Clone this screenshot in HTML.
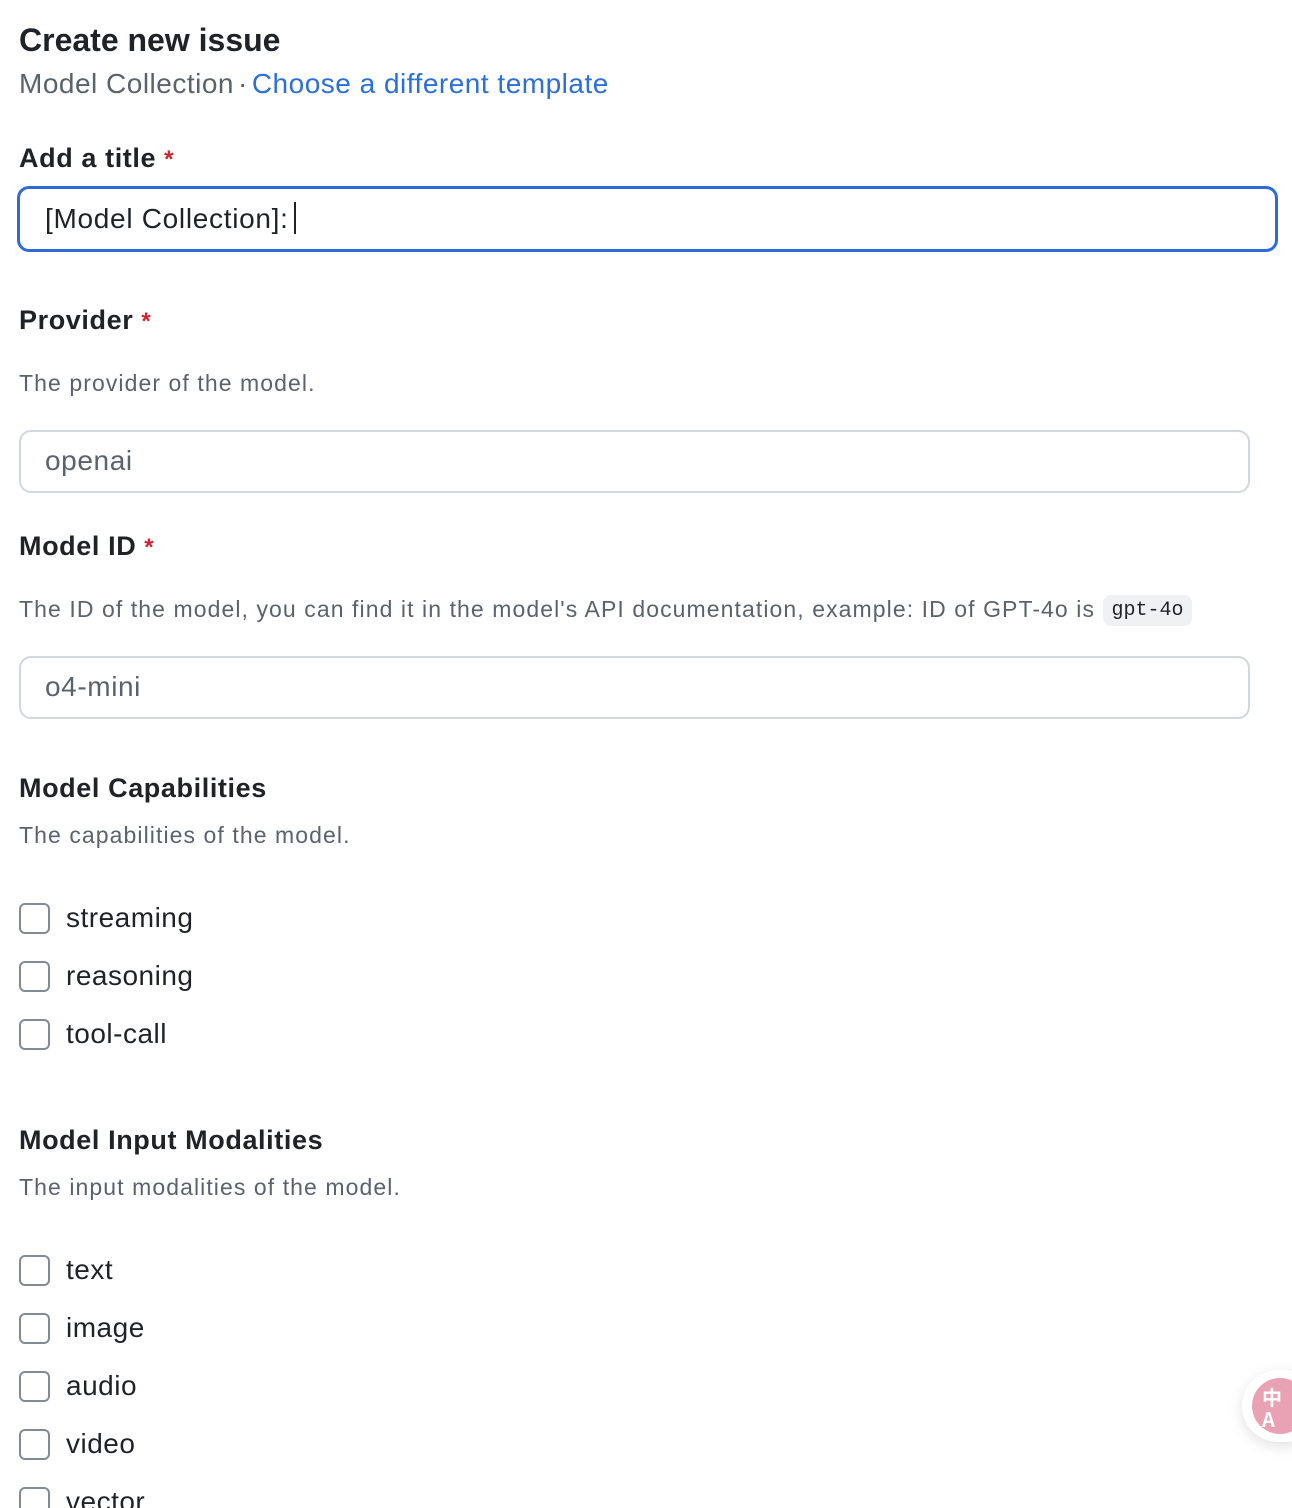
<!DOCTYPE html>
<html><head><meta charset="utf-8"><style>
html,body{margin:0;padding:0;background:#fff;width:1292px;height:1508px;overflow:hidden;position:relative;font-family:"Liberation Sans",sans-serif;color:#1f2328}
.a{position:absolute;white-space:nowrap;line-height:40px;height:40px}
.h{font-weight:bold;font-size:27px;letter-spacing:0.6px}
.d{font-size:23px;color:#59636e;letter-spacing:1.08px}
.req{color:#d1242f;font-size:24px;margin-left:8px}
.inp{position:absolute;left:19px;width:1227px;height:59px;border:2px solid #d0d7de;border-radius:12px;box-sizing:content-box;background:#fff}
.inp span{position:absolute;left:24px;top:9px;font-size:28px;line-height:40px;color:#59636e;letter-spacing:0.6px}
.cb{position:absolute;left:19px;width:27px;height:27px;border:2px solid #818b98;border-radius:6px}
.cl{position:absolute;left:66px;font-size:28px;line-height:40px;height:40px;color:#1f2328;letter-spacing:0.5px}
</style></head><body>
<div class="a" style="left:19px;top:20px;font-size:32px;font-weight:bold">Create new issue</div>
<div class="a" style="left:19px;top:64px;font-size:28px;color:#59636e;letter-spacing:0.5px">Model Collection<span style="margin:0 4px">·</span><span style="color:#2a6fdb">Choose a different template</span></div>

<div class="a h" style="left:19px;top:138px">Add a title<span class="req">*</span></div>
<div style="position:absolute;left:17px;top:186px;width:1255px;height:60px;border:3px solid #2f6bd6;border-radius:12px"></div>
<div class="a" style="left:45px;top:199px;font-size:28px;color:#1f2328;letter-spacing:0.7px">[Model Collection]:<span style="display:inline-block;width:2px;height:32px;background:#1f2328;vertical-align:-6px;margin-left:5px"></span></div>

<div class="a h" style="left:19px;top:300px">Provider<span class="req">*</span></div>
<div class="a d" style="left:19px;top:363px">The provider of the model.</div>
<div class="inp" style="top:430px"><span>openai</span></div>

<div class="a h" style="left:19px;top:526px">Model ID<span class="req">*</span></div>
<div class="a d" style="left:19px;top:589px">The ID of the model, you can find it in the model's API documentation, example: ID of GPT-4o is</div>
<div style="position:absolute;left:1103px;top:595px;width:89px;height:31px;background:#eff1f3;border-radius:8px;font-family:'Liberation Mono',monospace;font-size:20px;line-height:31px;text-align:center;color:#1f2328">gpt-4o</div>
<div class="inp" style="top:656px"><span>o4-mini</span></div>

<div class="a h" style="left:19px;top:768px">Model Capabilities</div>
<div class="a d" style="left:19px;top:815px">The capabilities of the model.</div>
<div class="cb" style="top:903px"></div><div class="cl" style="top:898px">streaming</div>
<div class="cb" style="top:961px"></div><div class="cl" style="top:956px">reasoning</div>
<div class="cb" style="top:1019px"></div><div class="cl" style="top:1014px">tool-call</div>

<div class="a h" style="left:19px;top:1120px">Model Input Modalities</div>
<div class="a d" style="left:19px;top:1167px">The input modalities of the model.</div>
<div class="cb" style="top:1255px"></div><div class="cl" style="top:1250px">text</div>
<div class="cb" style="top:1313px"></div><div class="cl" style="top:1308px">image</div>
<div class="cb" style="top:1371px"></div><div class="cl" style="top:1366px">audio</div>
<div class="cb" style="top:1429px"></div><div class="cl" style="top:1424px">video</div>
<div class="cb" style="top:1487px"></div><div class="cl" style="top:1482px">vector</div>

<div style="position:absolute;left:1242px;top:1370px;width:80px;height:72px;border-radius:36px;background:#fff;box-shadow:0 4px 14px rgba(0,0,0,0.12)"></div>
<div style="position:absolute;left:1252px;top:1378px;width:56px;height:56px;border-radius:28px;background:#e8a2b4;color:#fff;font-family:'Noto Sans CJK SC',sans-serif;font-size:20px;font-weight:bold;line-height:22px;padding:8px 0 0 10px;box-sizing:border-box">中<br>A</div>
</body></html>
